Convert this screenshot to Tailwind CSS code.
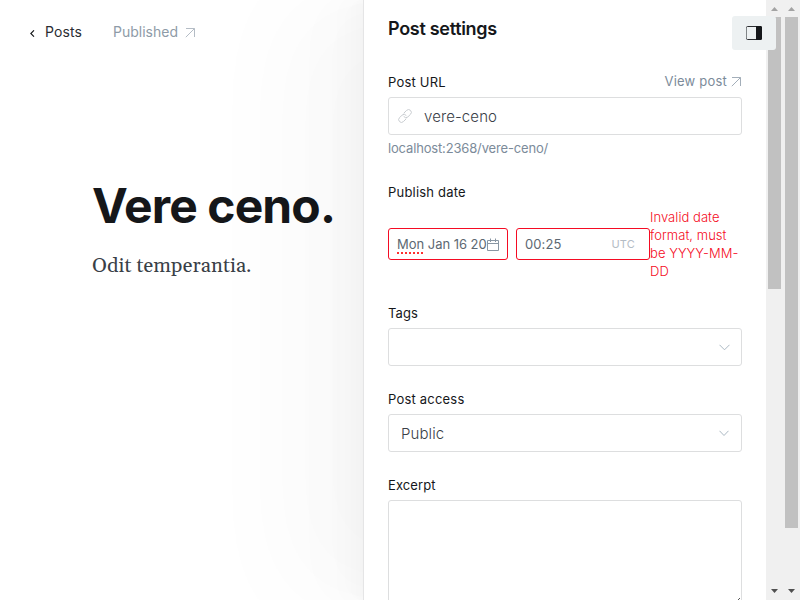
<!DOCTYPE html>
<html lang="en">
<head>
<meta charset="utf-8">
<title>Post settings</title>
<script src="https://cdn.jsdelivr.net/npm/@tailwindcss/browser@4"></script>
</head>
<body class="relative flex h-[600px] w-[800px] overflow-hidden bg-white font-[Inter,sans-serif] text-[#15171a]">
  <main class="w-[363px] shrink-0">
    <header class="flex h-16 items-center pl-[29px] text-[14px] leading-5">
      <a class="flex items-center tracking-[0.1px] text-[#2a2d32]">
        <svg class="mt-[2px] mr-[9px] h-[7px] w-[7px]" viewBox="0 0 7 7" fill="none" stroke="#15171a" stroke-width="1.1"><path d="M5 .3 1.8 3.5 5 6.7"/></svg>
        <span>Posts</span>
      </a>
      <a class="ml-[31px] flex items-center text-[#8e9ba7]">
        <span>Published</span>
        <svg class="mt-px ml-[7px] h-[11px] w-[11px]" viewBox="0 0 11 11" fill="none" stroke="#b4bcc5"><path d="M1 1.500h8.500V10M9.500 1.500 .8 10.200"/></svg>
      </a>
    </header>
    <article class="pt-[111px] pl-[92px]">
      <h1 class="text-[48px] leading-[62px] font-bold tracking-[-0.9px] whitespace-nowrap">Vere ceno.</h1>
      <p class="mt-[13px] font-[Georgia,Gelasio,serif] text-[20px] leading-8 tracking-[0.12px] whitespace-nowrap text-[#394047]">Odit temperantia.</p>
    </article>
  </main>

  <aside class="h-[600px] w-[403px] shrink-0 border-l border-[#e5e5e6] bg-white pr-6 pl-6 text-[13px] shadow-[-2.8px_0_2.2px_rgba(0,0,0,0.006),-6.7px_0_5.3px_rgba(0,0,0,0.008),-12.5px_0_10px_rgba(0,0,0,0.008),-22.3px_0_17.9px_rgba(0,0,0,0.01),-41.8px_0_50px_rgba(0,0,0,0.012),-80px_0_100px_rgba(0,0,0,0.022)]">
    <h2 class="pt-[17px] text-[18px] leading-6 font-semibold tracking-[-0.3px]">Post settings</h2>

    <div class="mt-[31px] flex h-[18px] w-[354px] items-center justify-between leading-[18px]">
      <label class="pt-[2px] tracking-[0.2px]">Post URL</label>
      <a class="flex items-center tracking-[0.2px] text-[#7c8b9a]">View post
        <svg class="mt-px ml-[4px] h-[11px] w-[11px]" viewBox="0 0 11 11" fill="none" stroke="#a3aeb9"><path d="M1 1.500h8.500V10M9.500 1.500 .8 10.200"/></svg>
      </a>
    </div>
    <div class="mt-[7px] flex h-[38px] w-[354px] items-center rounded-[3px] border border-[#dddedf] pl-[9px] text-[15px] tracking-[0.1px] text-[#394047]">
      <svg class="mr-[12px] h-[14px] w-[14px]" viewBox="0 0 14 14" fill="none" stroke="#c8ccd0" stroke-linecap="round"><path d="m6 4 2.6-2.6a2.7 2.7 0 0 1 3.9 3.9L9.900 7.900a2.700 2.700 0 0 1-4-.2M8 10l-2.600 2.600a2.700 2.700 0 0 1-3.900-3.900L4.100 6.100a2.700 2.700 0 0 1 4 .2"/></svg>
      <span class="pt-[2px] font-light">vere-ceno</span>
    </div>
    <p class="mt-[4px] leading-[18px] tracking-[-0.16px] text-[#7c8b9a]">localhost:2368/vere-ceno/</p>

    <label class="mt-[26px] block leading-[18px] tracking-[0.2px]">Publish date</label>
    <div class="mt-[7px] flex h-[72px] items-center">
      <div class="flex h-8 w-[120px] items-center rounded-[3px] border border-[#f50b23] pl-2 text-[#5d6872]">
        <span class="w-[90px] shrink-0 leading-5 tracking-[-0.03px] whitespace-nowrap"><span class="underline decoration-[#ff3030] decoration-dotted decoration-2 underline-offset-[3px]">Mon</span> Jan 16 20</span>
        <svg class="h-[13px] w-[12px]" viewBox="0 0 12 13" fill="none" stroke="#8996a3"><path d="M.5 2.500h11v10H.500zM.500 5.500h11M3.500 .500v3.500M8.500 .500v3.500"/></svg>
      </div>
      <div class="ml-2 flex h-8 w-[134px] items-center justify-between rounded-[3px] border border-[#f50b23] pr-[14px] pl-2 tracking-[0.1px] text-[#5d6872]">
        <span class="pt-px">00:25</span><span class="text-[11px] tracking-[0.2px] text-[#b4bcc5]">UTC</span>
      </div>
      <p class="w-[92px] leading-[18px] font-light tracking-[0.05px] text-[#f50b23]">Invalid date format, must be YYYY-MM-DD</p>
    </div>

    <label class="mt-[24px] block leading-[18px] tracking-[0.1px]">Tags</label>
    <div class="mt-[6px] flex h-[38px] w-[354px] items-center justify-end rounded-[3px] border border-[#dddedf] pr-[11px]">
      <svg class="h-[7px] w-[11px]" viewBox="0 0 11 7" fill="none" stroke="#abb8c3"><path d="m.5.8 5 5 5-5"/></svg>
    </div>

    <label class="mt-[24px] block leading-[18px] tracking-[0.2px]">Post access</label>
    <div class="mt-[6px] flex h-[38px] w-[354px] items-center justify-between rounded-[3px] border border-[#dddedf] pr-[12px] pl-3">
      <span class="pt-[2px] text-[15px] font-light tracking-[0.1px] text-[#394047]">Public</span>
      <svg class="h-[7px] w-[10px]" viewBox="0 0 10 7" fill="none" stroke="#abb8c3"><path d="m.5.8 4.500 4.700L9.500.8"/></svg>
    </div>

    <label class="mt-[24px] block leading-[18px] tracking-[0.1px]">Excerpt</label>
    <div class="mt-[6px] flex h-[102px] w-[354px] items-end justify-end rounded-t-[3px] border border-[#dddedf] pb-px">
      <svg class="h-[2px] w-[4px]" viewBox="0 0 4 2" fill="#555"><path d="M2 0h1v1H2zM1 1h1v1H1z"/></svg>
    </div>
  </aside>

  <div class="z-10 flex h-[600px] w-[17px] shrink-0 flex-col items-center bg-[#f0f0f0]">
    <svg class="h-[17px] w-[17px] shrink-0" viewBox="0 0 17 17" fill="#a3a3a3"><path d="M5 11 8.500 7 12 11z"/></svg>
    <div class="h-[272px] w-[13px] shrink-0 bg-[#c1c1c1]"></div>
    <svg class="mt-auto h-[17px] w-[17px] shrink-0" viewBox="0 0 17 17" fill="#505050"><path d="M5 6 8.500 10 12 6z"/></svg>
  </div>
  <div class="z-10 flex h-[600px] w-[17px] shrink-0 flex-col items-center bg-[#f0f0f0]">
    <svg class="h-[17px] w-[17px] shrink-0" viewBox="0 0 17 17" fill="#a3a3a3"><path d="M5 11 8.500 7 12 11z"/></svg>
    <div class="h-[511px] w-[13px] shrink-0 bg-[#c1c1c1]"></div>
    <svg class="mt-auto h-[17px] w-[17px] shrink-0" viewBox="0 0 17 17" fill="#505050"><path d="M5 6 8.500 10 12 6z"/></svg>
  </div>

  <button class="absolute top-4 left-[732px] z-20 flex h-[34px] w-11 items-center justify-center rounded-[3px] bg-[#edf1f2]" aria-label="Toggle settings">
    <svg class="h-[14px] w-[16px]" viewBox="0 0 16 14" fill="none"><rect x=".5" y=".5" width="15" height="13" rx="1" stroke="#2b2d30"/><path d="M.500 1.500v11" stroke="#808587"/><path d="M10 0h5l1 1v12l-1 1h-5z" fill="#15171a"/></svg>
  </button>
</body>
</html>
